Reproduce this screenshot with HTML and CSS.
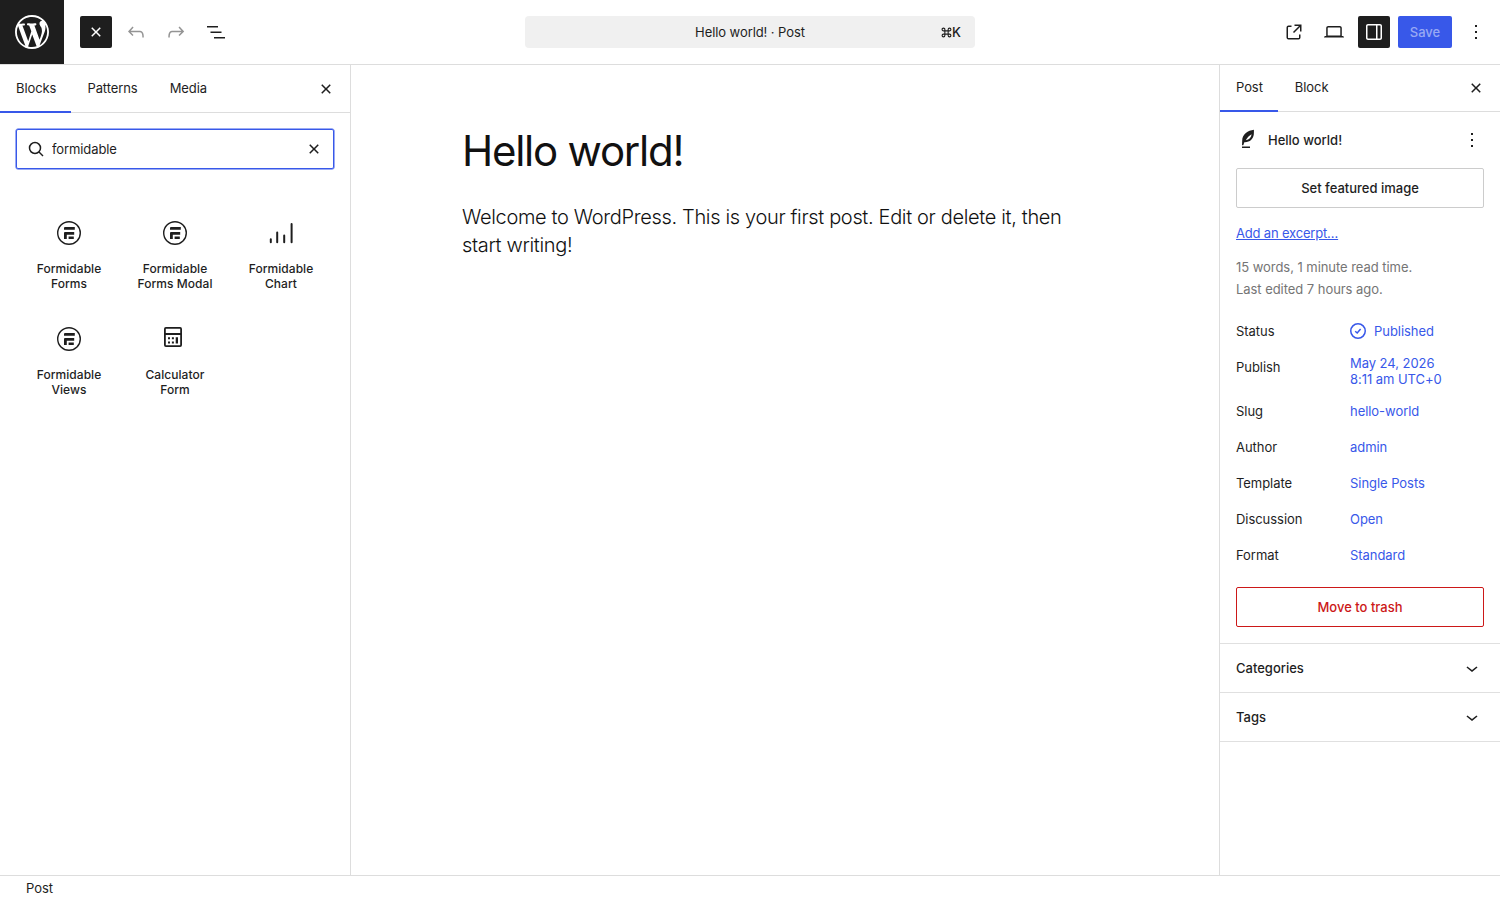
FILE: index.html
```html
<!DOCTYPE html>
<html lang="en">
<head>
    <meta charset="UTF-8">
    <meta name="viewport" content="width=device-width, initial-scale=1.0">
    <title>Edit Post</title>
    <link rel="stylesheet" href="styles.css">
</head>
<body>
    <!-- Shared icons -->
    <svg class="hidden">
        <symbol id="close" viewBox="0 0 24 24"><path d="M12 13.06l3.712 3.713 1.061-1.06L13.061 12l3.712-3.712-1.06-1.06L12 10.938 8.288 7.227l-1.061 1.06L10.939 12l-3.712 3.712 1.06 1.061L12 13.061z"/></symbol>
        <symbol id="more" viewBox="0 0 24 24"><path d="M13 19h-2v-2h2v2zm0-6h-2v-2h2v2zm0-6h-2V5h2v2z"/></symbol>
        <symbol id="chevron" viewBox="0 0 24 24"><path d="M17.5 11.6L12 16l-5.5-4.4.9-1.2L12 14l4.5-3.6 1 1.2z"/></symbol>
        <symbol id="formidable" viewBox="0 0 24 24">
            <circle cx="12" cy="12" r="11.3" fill="none" stroke="currentColor" stroke-width="1.4"/>
            <path d="M8 6h9.8v2.8H7V7q0-1 1-1zM8 10.9h9.2v2.8H9.8V18H7v-6.1q0-1 1-1zM11.6 15.4h5.2V18h-5.2z"/>
        </symbol>
    </svg>

    <header class="header">
        <a class="site-logo">
            <svg viewBox="0 0 20 20"><path d="M20 10c0-5.51-4.49-10-10-10C4.48 0 0 4.49 0 10c0 5.52 4.48 10 10 10 5.51 0 10-4.48 10-10zM7.78 15.37L4.37 6.22c.55-.02 1.17-.08 1.17-.08.5-.06.44-1.13-.06-1.11 0 0-1.45.11-2.37.11-.18 0-.37 0-.58-.01C4.12 2.69 6.87 1.11 10 1.11c2.33 0 4.45.87 6.05 2.34-.68-.11-1.65.39-1.65 1.58 0 .74.45 1.36.9 2.1.35.61.55 1.36.55 2.46 0 1.49-1.4 5-1.4 5l-3.03-8.37c.54-.02.82-.17.82-.17.5-.05.44-1.25-.06-1.22 0 0-1.44.12-2.38.12-.87 0-2.33-.12-2.33-.12-.5-.03-.56 1.2-.06 1.22l.92.08 1.26 3.41zM17.41 10c.24-.64.74-1.87.43-4.25.7 1.29 1.05 2.71 1.05 4.25 0 3.29-1.73 6.24-4.4 7.78.97-2.59 1.94-5.2 2.92-7.78zM6.1 18.09C3.12 16.65 1.11 13.53 1.11 10c0-1.3.23-2.48.72-3.59C3.25 10.3 4.67 14.2 6.1 18.09zm4.03-6.63l2.58 6.98c-.86.29-1.76.45-2.71.45-.79 0-1.57-.11-2.29-.33.81-2.38 1.62-4.74 2.42-7.1z"/></svg>
        </a>
        <div class="tools">
            <button class="icon-btn dark"><svg><use href="#close"/></svg></button>
            <button class="icon-btn disabled"><svg viewBox="0 0 24 24"><path d="M18.3 11.7c-.6-.6-1.4-.9-2.3-.9H6.7l2.9-3.3-1.1-1-4.5 5L8.5 16l1-1-2.7-2.7H16c.5 0 .9.2 1.3.5 1 1 1 3.4 1 4.5v.3h1.5v-.2c0-1.5 0-4.3-1.5-5.7z"/></svg></button>
            <button class="icon-btn disabled"><svg viewBox="0 0 24 24"><path d="M15.6 6.5l-1.1 1 2.9 3.3H8c-.9 0-1.7.3-2.3.9-1.4 1.5-1.4 4.2-1.4 5.6v.2h1.5v-.3c0-1.1 0-3.5 1-4.5.3-.3.7-.5 1.3-.5h9.2L14.5 15l1.1 1.1 4.6-4.6-4.6-5z"/></svg></button>
            <button class="icon-btn"><svg viewBox="0 0 24 24"><path d="M3 6h11v1.5H3V6Zm3.5 5.5h11V13h-11v-1.5ZM21 17H10v1.5h11V17Z"/></svg></button>
        </div>
        <button class="command-bar">
            <span class="command-title">Hello world! · Post</span>
            <span class="shortcut"><svg viewBox="0 0 10 10"><path d="M3.5 3.5V2.25A1.25 1.25 0 1 0 2.25 3.5h5.5A1.25 1.25 0 1 0 6.5 2.25v5.5A1.25 1.25 0 1 0 7.75 6.5h-5.5A1.25 1.25 0 1 0 3.5 7.75z"/></svg>K</span>
        </button>
        <div class="settings">
            <button class="icon-btn"><svg viewBox="0 0 24 24"><path d="M19.5 4.5h-7V6h4.44l-5.97 5.97 1.06 1.06L18 7.06v4.44h1.5v-7Zm-13 1a2 2 0 0 0-2 2v10a2 2 0 0 0 2 2h10a2 2 0 0 0 2-2v-3H17v3a.5.5 0 0 1-.5.5h-10a.5.5 0 0 1-.5-.5v-10a.5.5 0 0 1 .5-.5h3V5.5h-3Z"/></svg></button>
            <button class="icon-btn"><svg viewBox="0 0 24 24"><path d="M20.5 16h-.7V8c0-1.1-.9-2-2-2H6.2c-1.1 0-2 .9-2 2v8h-.7c-.8 0-1.5.7-1.5 1.5h20c0-.8-.7-1.5-1.5-1.5zM5.7 8c0-.3.2-.5.5-.5h11.6c.3 0 .5.2.5.5v7.6H5.7V8z"/></svg></button>
            <button class="icon-btn dark"><svg viewBox="0 0 24 24"><path d="M18 4H6c-1.1 0-2 .9-2 2v12c0 1.1.9 2 2 2h12c1.1 0 2-.9 2-2V6c0-1.1-.9-2-2-2zm-4 14.5H6c-.3 0-.5-.2-.5-.5V6c0-.3.2-.5.5-.5h8v13zm4.5-.5c0 .3-.2.5-.5.5h-2.5v-13H18c.3 0 .5.2.5.5v12z"/></svg></button>
            <button class="save">Save</button>
            <button class="icon-btn"><svg><use href="#more"/></svg></button>
        </div>
    </header>

    <div class="body">
        <!-- Block inserter -->
        <aside class="inserter">
            <div class="tabs">
                <button class="tab active">Blocks</button>
                <button class="tab">Patterns</button>
                <button class="tab">Media</button>
                <button class="icon-btn tabs-close"><svg><use href="#close"/></svg></button>
            </div>
            <div class="search">
                <svg viewBox="0 0 24 24"><g fill="none" stroke="currentColor" stroke-width="1.5"><circle cx="11" cy="11" r="5.5"/><path d="M15 15l4 4"/></g></svg>
                <input type="text" value="formidable">
                <svg><use href="#close"/></svg>
            </div>
            <div class="blocks">
                <div class="block"><svg><use href="#formidable"/></svg><span>Formidable<br>Forms</span></div>
                <div class="block"><svg><use href="#formidable"/></svg><span>Formidable<br>Forms Modal</span></div>
                <div class="block"><svg viewBox="0 0 24 24"><path d="M.8 18.2q0-1 1-1t1 1v3q0 1-1 1t-1-1zM7.2 11.5q0-1 1-1t1 1v9.7q0 1-1 1t-1-1zM14.2 14.5q0-1 1-1t1 1v6.7q0 1-1 1t-1-1zM21.6 3q0-1 1-1t1 1v18.2q0 1-1 1t-1-1z"/></svg><span>Formidable<br>Chart</span></div>
                <div class="block"><svg><use href="#formidable"/></svg><span>Formidable<br>Views</span></div>
                <div class="block"><svg viewBox="0 0 24 24"><path fill="none" stroke="currentColor" stroke-width="1.8" d="M2.900.9h14.200q1 0 1 1v16.200q0 1-1 1H2.900q-1 0-1-1V1.900q0-1 1-1zM1.900 7h16.200"/><path d="M5 10.300h2v2H5zM8.900 10.300h2v2h-2zM5 14.400h2v2H5zM8.900 14.400h2v2h-2zM12.700 10.300h2.300v6.100h-2.300z"/></svg><span>Calculator<br>Form</span></div>
            </div>
        </aside>

        <main class="canvas">
            <h1>Hello world!</h1>
            <p>Welcome to WordPress. This is your first post. Edit or delete it, then<br>start writing!</p>
        </main>

        <!-- Post settings -->
        <aside class="sidebar">
            <div class="tabs">
                <button class="tab active">Post</button>
                <button class="tab">Block</button>
                <button class="icon-btn tabs-close"><svg><use href="#close"/></svg></button>
            </div>
            <div class="post-panel">
                <div class="post-card">
                    <svg viewBox="0 0 24 24"><path d="M17.9 1.8C12 2.5 6.300 6.500 6.200 12.400L6 17.200h1.300l1-3C13.800 14.500 17.200 11 17.800 6.500c.2-1.500.1-3.200.1-4.700zM9.800 12.200c1.400-2.600 3.200-4.600 5.800-6-.4 3.200-2.300 5.300-5.800 6zM6 18.400h8v1.500H6z"/></svg>
                    <h2>Hello world!</h2>
                    <button class="icon-btn"><svg><use href="#more"/></svg></button>
                </div>
                <button class="wide-btn">Set featured image</button>
                <a class="excerpt" href="#">Add an excerpt…</a>
                <p class="info">15 words, 1 minute read time.<br>Last edited 7 hours ago.</p>
                <dl class="fields">
                    <dt>Status</dt>
                    <dd><svg viewBox="0 0 24 24"><g fill="none" stroke="currentColor" stroke-width="1.5"><circle cx="12" cy="12" r="7.25"/><path d="M9.2 12.2l2 1.8 3.400-3.900"/></g></svg>Published</dd>
                    <dt>Publish</dt>
                    <dd class="date">May 24, 2026<br>8:11 am UTC+0</dd>
                    <dt>Slug</dt>
                    <dd>hello-world</dd>
                    <dt>Author</dt>
                    <dd>admin</dd>
                    <dt>Template</dt>
                    <dd>Single Posts</dd>
                    <dt>Discussion</dt>
                    <dd>Open</dd>
                    <dt>Format</dt>
                    <dd>Standard</dd>
                </dl>
                <button class="wide-btn trash">Move to trash</button>
            </div>
            <div class="panel-toggle"><span>Categories</span><svg><use href="#chevron"/></svg></div>
            <div class="panel-toggle"><span>Tags</span><svg><use href="#chevron"/></svg></div>
        </aside>
    </div>

    <footer class="footer">Post</footer>
</body>
</html>
```

FILE: styles.css
```css
* {
    box-sizing: border-box;
}
body {
    margin: 0;
    height: 100vh;
    display: flex;
    flex-direction: column;
    overflow: hidden;
    background: #fff;
    color: #1e1e1e;
    font-family: Inter, sans-serif;
    font-size: 13px;
    line-height: 16px;
    letter-spacing: -.05px;
}
svg {
    display: block;
    flex-shrink: 0;
    width: 24px;
    height: 24px;
    fill: currentColor;
}
.hidden {
    display: none;
}
button {
    padding: 0;
    border: none;
    background: none;
    color: inherit;
    font: inherit;
    letter-spacing: inherit;
}

/* Header */
.header {
    display: grid;
    grid-template-columns: 64px 461px 450px 525px;
    align-items: center;
    height: 65px;
    border-bottom: 1px solid #ddd;
}
.site-logo {
    display: flex;
    align-items: center;
    justify-content: center;
    width: 64px;
    height: 64px;
    background: #1e1e1e;
    color: #fff;
}
.site-logo svg {
    width: 34px;
    height: 34px;
}
.tools {
    display: flex;
    gap: 8px;
    padding-left: 16px;
}
.icon-btn {
    display: flex;
    align-items: center;
    justify-content: center;
    width: 32px;
    height: 32px;
    border-radius: 2px;
}
.dark {
    background: #1e1e1e;
    color: #fff;
}
.disabled {
    color: #949494;
}
.command-bar {
    display: grid;
    grid-template-columns: 1fr auto 1fr;
    align-items: center;
    height: 32px;
    padding: 0 14px;
    border-radius: 4px;
    background: #f0f0f0;
}
.command-title {
    grid-column: 2;
    letter-spacing: -.08px;
}
.shortcut {
    display: flex;
    align-items: center;
    justify-content: flex-end;
    font-weight: 500;
}
.shortcut svg {
    width: 11px;
    height: 11px;
    fill: none;
    stroke: currentColor;
    stroke-width: 1;
}
.settings {
    display: flex;
    justify-content: flex-end;
    gap: 8px;
    padding-right: 8px;
}
.save {
    width: 54px;
    height: 32px;
    border-radius: 2px;
    background: #3858e9;
    color: #98a9f4;
    font-weight: 500;
    letter-spacing: 0;
}

/* Columns */
.body {
    display: grid;
    grid-template-columns: 351px 1fr 281px;
    height: 810px;
}
.inserter {
    border-right: 1px solid #ddd;
}
.sidebar {
    border-left: 1px solid #ddd;
}
.tabs {
    display: flex;
    align-items: center;
    height: 48px;
    padding-right: 8px;
    border-bottom: 1px solid #ddd;
}
.sidebar .tabs {
    height: 47px;
}
.tab {
    height: 48px;
    padding: 0 16px 1px;
    letter-spacing: -.08px;
}
.tab.active {
    padding-right: 15px;
    box-shadow: inset 0 -2px 0 #3858e9;
}
.sidebar .tab {
    height: 47px;
    padding-bottom: 2px;
}
.sidebar .tab + .tab {
    padding-left: 17px;
}
.tabs-close {
    margin-left: auto;
}

/* Inserter */
.search {
    display: flex;
    align-items: center;
    height: 40px;
    margin: 16px 16px 0;
    padding: 0 7px;
    border: 1px solid #3858e9;
    border-radius: 2px;
    box-shadow: 0 0 0 .5px #3858e9;
}
.search input {
    flex: 1;
    min-width: 0;
    padding: 0 4px;
    border: none;
    outline: none;
    background: none;
    color: inherit;
    font: inherit;
    letter-spacing: -.1px;
}
.blocks {
    display: grid;
    grid-template-columns: repeat(3, 106px);
    grid-auto-rows: 106px;
    padding: 39px 16px 0;
}
.block {
    display: flex;
    flex-direction: column;
    align-items: center;
    gap: 16px;
    padding-top: 13px;
    font-size: 12px;
    font-weight: 500;
    line-height: 15px;
    letter-spacing: .05px;
    text-align: center;
}

/* Canvas */
.canvas {
    padding: 59px 0 0 111px;
    color: #111;
}
.canvas h1 {
    margin: 0;
    font-size: 42px;
    font-weight: 400;
    line-height: 54px;
    letter-spacing: -1.25px;
}
.canvas p {
    margin: 25px 0 0;
    font-size: 20px;
    font-weight: 300;
    line-height: 28px;
    letter-spacing: -.34px;
    white-space: nowrap;
}

/* Sidebar */
.post-panel {
    padding: 12px 16px 16px;
}
.post-card {
    display: flex;
    align-items: center;
    gap: 8px;
    height: 32px;
    margin-right: -4px;
}
.post-card h2 {
    flex: 1;
    margin: 0;
    font-size: 13px;
    font-weight: 500;
    letter-spacing: 0;
}
.wide-btn {
    display: block;
    width: 100%;
    height: 40px;
    margin-top: 12px;
    border: 1px solid #ccc;
    border-radius: 2px;
    font-weight: 500;
    letter-spacing: 0;
}
.excerpt {
    display: block;
    width: max-content;
    margin-top: 17px;
    color: #3858e9;
    letter-spacing: -.18px;
}
.info {
    margin: 15px 0 0;
    color: #757575;
    line-height: 22px;
}
.fields {
    display: grid;
    grid-template-columns: 110px 1fr;
    column-gap: 4px;
    row-gap: 4px;
    margin: 15px 0 0;
}
.fields dt,
.fields dd {
    display: flex;
    align-items: center;
    height: 32px;
    margin: 0;
}
.fields dd {
    color: #3858e9;
}
.fields dd svg {
    margin: 0 4px 0 -4px;
}
.fields .date {
    display: block;
    height: 40px;
    padding-top: 4px;
}
.wide-btn.trash {
    margin-top: 16px;
    border-color: #cc1818;
    color: #cc1818;
}
.panel-toggle {
    display: flex;
    align-items: center;
    justify-content: space-between;
    height: 49px;
    padding: 0 16px;
    border-top: 1px solid #e0e0e0;
    font-weight: 500;
    letter-spacing: 0;
}
.panel-toggle:last-child {
    height: 50px;
    border-bottom: 1px solid #e0e0e0;
}

.footer {
    height: 25px;
    padding: 4px 26px;
    border-top: 1px solid #ddd;
}
```
